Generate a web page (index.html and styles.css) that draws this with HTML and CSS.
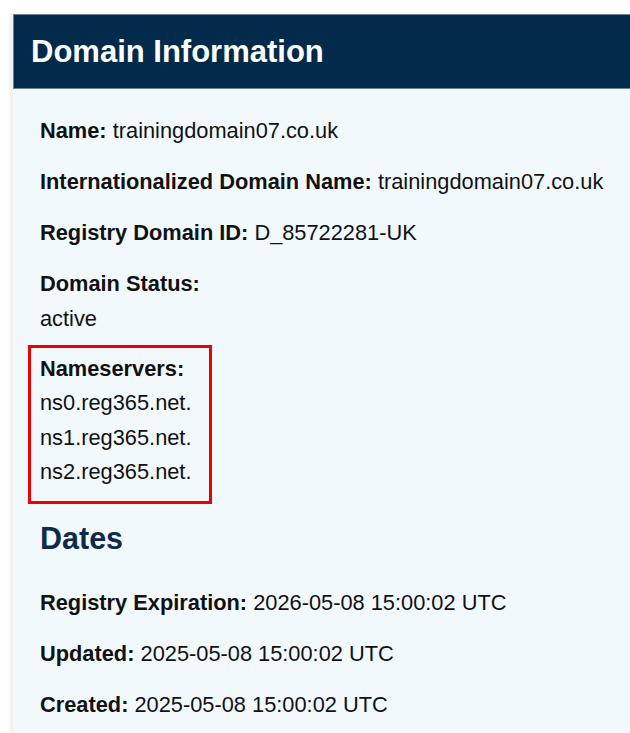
FILE: index.html
```html
<!DOCTYPE html>
<html lang="en">

<head>
    <meta charset="UTF-8">
    <meta name="viewport" content="width=device-width, initial-scale=1.0">
    <title>Domain Information</title>

    <link rel="stylesheet" href="styles.css">
</head>

<body>
    <div class="kort">
        <header>
            <h1>Domain Information</h1>
        </header>

        <section class="indhold">
            <p><b>Name:</b> trainingdomain07.co.uk</p>
            <p><b>Internationalized Domain Name:</b> trainingdomain07.co.uk</p>
            <p><b>Registry Domain ID:</b> D_85722281-UK</p>
            <p><b>Domain Status:</b><br>active</p>

            <div class="markeret">
                <p><b>Nameservers:</b><br>ns0.reg365.net.<br>ns1.reg365.net.<br>ns2.reg365.net.</p>
            </div>

            <h2>Dates</h2>
            <p><b>Registry Expiration:</b> 2026-05-08 15:00:02 UTC</p>
            <p><b>Updated:</b> 2025-05-08 15:00:02 UTC</p>
            <p><b>Created:</b> 2025-05-08 15:00:02 UTC</p>
        </section>
    </div>
</body>

</html>
```

FILE: styles.css
```css
body {
    margin: 0;
    background-color: #ffffff;
    font-family: "Liberation Sans", Arial, sans-serif;
}

.kort {
    margin: 14px 0 0 13px;
    background-color: #f2f9fd;
    box-shadow: -3px 0 4px rgba(0, 0, 0, 0.07);
}

header {
    height: 73px;
    display: flex;
    align-items: center;
    padding-left: 17px;
    background-color: #022a4a;
    border: 1px solid #6f8294;
    border-right: none;
}

h1 {
    margin: 0;
    font-size: 31px;
    font-weight: bold;
    color: #ffffff;
}

.indhold {
    padding: 25px 0 11px 27px;
}

p {
    margin: 0 0 16.5px;
    font-size: 21.8px;
    line-height: 34.5px;
    color: #111111;
}

.indhold p:last-child {
    margin-bottom: 0;
}

.markeret {
    width: 160px;
    margin: -8px 0 0 -12px;
    padding: 4px 9px 11px 9px;
    border: 3px solid #ee0000;
}

.markeret p {
    margin: 0;
}

h2 {
    margin: 16px 0 30px;
    font-size: 30.5px;
    line-height: 36px;
    color: #0e2b4a;
}
```
